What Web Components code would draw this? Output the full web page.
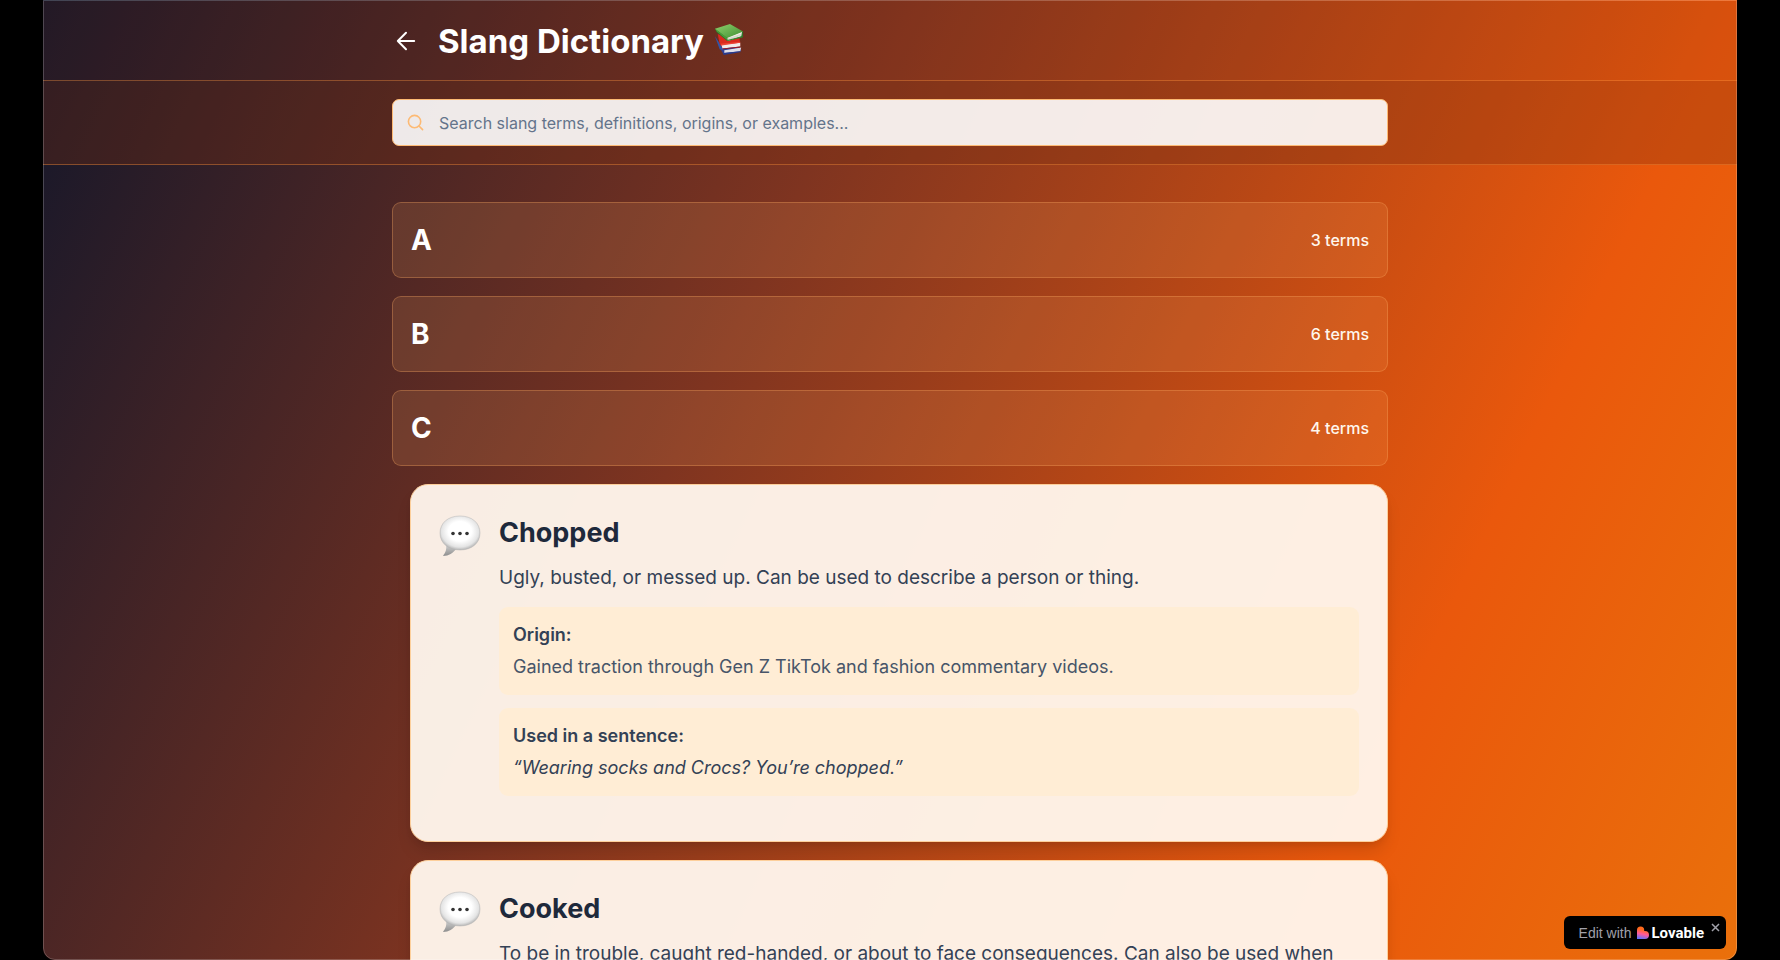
<!DOCTYPE html>
<html lang="en">
<head>
<meta charset="utf-8">
<title>Slang Dictionary</title>
<style>
html { background: #000; }
body { margin: 0; font-family: Inter, sans-serif; height: 100vh; overflow: hidden; }
</style>
</head>
<body>
<slang-app>
  <slang-header slot="header">Slang Dictionary</slang-header>
  <slang-search slot="search"></slang-search>
  <letter-row letter="A" count="3"></letter-row>
  <letter-row letter="B" count="6"></letter-row>
  <letter-row letter="C" count="4"></letter-row>
  <term-card>
    <span slot="term">Chopped</span>
    <span slot="definition">Ugly, busted, or messed up. Can be used to describe a person or thing.</span>
    <term-note slot="notes" label="Origin:">Gained traction through Gen Z TikTok and fashion commentary videos.</term-note>
    <term-note slot="notes" label="Used in a sentence:" quote>“Wearing socks and Crocs? You’re chopped.”</term-note>
  </term-card>
  <term-card>
    <span slot="term">Cooked</span>
    <span slot="definition">To be in trouble, caught red-handed, or about to face consequences. Can also be used when</span>
  </term-card>
  <lovable-badge slot="badge"></lovable-badge>
</slang-app>
<script>
const define = (name, html, setup) => {
  const template = document.createElement('template');
  template.innerHTML = '<style>*{box-sizing:border-box}</style>' + html;
  customElements.define(name, class extends HTMLElement {
    constructor() {
      super();
      this.attachShadow({ mode: 'open' }).append(template.content.cloneNode(true));
    }
    connectedCallback() { if (setup) setup(this, this.shadowRoot); }
  });
};

define('slang-app', `
<style>
:host { display: block; height: 100%; padding: 0 43px; box-sizing: border-box; }
.window { position: relative; height: 100%; overflow: hidden; border-radius: 0 0 12px 12px; }
.window::after { content: ""; position: absolute; inset: 0; border: 1px solid rgba(255,255,255,.2); border-radius: inherit; pointer-events: none; }
.page { min-height: 3600px; padding-top: 1px; background: linear-gradient(to bottom right, #12162a, #7f3420 25%, #ea580c 50%, #eab308); }
.list { display: flex; flex-direction: column; gap: 18px; max-width: 1052px; margin: 0 auto; padding: 37px 28px; }
</style>
<div class="window">
  <div class="page">
    <slot name="header"></slot>
    <slot name="search"></slot>
    <main class="list"><slot></slot></main>
  </div>
  <slot name="badge"></slot>
</div>`);

define('slang-header', `
<style>
:host { display: block; background: rgba(124,45,18,.16); border-bottom: 1px solid rgba(251,146,60,.4); }
header { display: flex; align-items: center; gap: 22px; height: 79px; max-width: 1052px; margin: 0 auto; padding: 0 28px; }
button { display: grid; padding: 0 0 0 4px; border: 0; background: none; color: #fff; }
h1 { display: flex; align-items: center; gap: 10px; margin: 0; font-size: 33px; line-height: 42px; font-weight: 700; color: #fff; }
h1 svg { margin-bottom: 4px; }
</style>
<header>
  <button aria-label="Back"><svg width="20" height="20" viewBox="0 0 22 22" fill="none" stroke="currentColor" stroke-width="2.200" stroke-linecap="round" stroke-linejoin="round"><path d="M11 2 2 11l9 9M2 11h18"/></svg></button>
  <h1><slot></slot>
    <svg width="30" height="32" viewBox="0 0 32 34" role="img" aria-label="Books">
      <defs><linearGradient id="g" x1="0" y1="0" x2="1" y2="1"><stop stop-color="#8fd06c"/><stop offset="1" stop-color="#3f8f32"/></linearGradient></defs>
      <path d="M7 24v4l3 5 19-3-1-4z" fill="#2f3f96"/><path d="m11 29 18-3-1 4-17 2z" fill="#e0dfe8"/><path d="m10 32 18-2v1l-18 3z" fill="#273a8c"/>
      <path d="m1 14 5 14 4 1-3-6z" fill="#3454a6"/>
      <path d="m4 12 2 10 3 4 19-2-1-10z" fill="#d92a1f"/><path d="m8 23 20-2v4l-19 2z" fill="#f1ebea"/><path d="m7 22 21-2v1L8 24z" fill="#ef4435"/><path d="m9 27 19-2v1L9 28z" fill="#a9141a"/>
      <path d="m1 6 2 4 11 9 17-4V9z" fill="#2f7428"/><path d="m14 15 16-6-1 5-14 5z" fill="#f0f0e6"/><path d="m14 17 15-5M14 18l15-5" stroke="#b9bcae" stroke-width=".5"/>
      <path d="m1 6 16-5 14 8-17 7z" fill="url(#g)"/><path d="m1 6 13 10v2L3 9z" fill="#4c9e3b"/><path d="m14 18 16-4v1l-15 4z" fill="#3a8730"/>
    </svg>
  </h1>
</header>`);

define('slang-search', `
<style>
:host { display: block; background: rgba(124,45,18,.3); border-bottom: 1px solid rgba(251,146,60,.4); }
search { display: block; max-width: 1052px; margin: 0 auto; padding: 18px 28px; }
label { display: flex; align-items: center; gap: 15px; height: 47px; padding: 0 14px; border: 1px solid #fdba74; border-radius: 7px; background: rgba(255,255,255,.9); color: #fdba74; }
input { flex: 1; min-width: 0; border: 0; outline: 0; padding: 0; background: none; font: 16px/24px Inter, sans-serif; color: #334155; }
input::placeholder { color: #64748b; opacity: 1; }
</style>
<search><label>
  <svg width="17" height="17" viewBox="0 0 18 18" fill="none" stroke="currentColor" stroke-width="1.700" stroke-linecap="round"><circle cx="8" cy="8" r="6.500"/><path d="m13 13 3.500 3.500"/></svg>
  <input type="text" aria-label="Search" placeholder="Search slang terms, definitions, origins, or examples...">
</label></search>`);

define('letter-row', `
<style>
:host { display: block; }
button { display: flex; justify-content: space-between; align-items: center; width: 100%; height: 76px; padding: 0 18px; border: 1px solid rgba(253,170,96,.32); border-radius: 9px; background: rgba(253,176,106,.14); color: #fff; font-family: inherit; text-align: left; }
.letter { font-size: 28px; line-height: 38px; font-weight: 700; }
.count { font-size: 16px; line-height: 24px; font-weight: 500; color: #fff7ed; }
</style>
<button><span class="letter"></span><span class="count"></span></button>`, (el, root) => {
  root.querySelector('.letter').textContent = el.getAttribute('letter');
  root.querySelector('.count').textContent = el.getAttribute('count') + ' terms';
});

define('term-card', `
<style>
:host { display: block; margin-left: 18px; }
article { display: flex; align-items: flex-start; gap: 18px; min-height: 358px; padding: 28px; border: 1px solid #fdcf9b; border-radius: 18px; background: rgba(255,246,236,.96); box-shadow: 0 12px 18px -4px rgba(0,0,0,.14), 0 4px 8px -4px rgba(0,0,0,.12); }
.icon { flex: none; margin-top: 2px; }
.body { flex: 1; min-width: 0; }
h2 { margin: 0 0 8px; font-size: 27px; line-height: 40px; font-weight: 700; color: #1e293b; }
p { margin: 0 0 12px; font-size: 19px; line-height: 34px; color: #334155; }
.notes { display: grid; gap: 13px; }
</style>
<article>
  <svg class="icon" width="42" height="42" viewBox="0 0 42 42" role="img" aria-label="Speech balloon">
    <defs>
      <radialGradient id="b" cx=".5" cy=".45" r=".58"><stop offset=".5" stop-color="#fff"/><stop offset=".8" stop-color="#e4e4e4"/><stop offset="1" stop-color="#a5a5a5"/></radialGradient>
      <linearGradient id="t" x1="0" y1="0" x2="0" y2="1"><stop stop-color="#cfcfcf"/><stop offset="1" stop-color="#8d8d8d"/></linearGradient>
    </defs>
    <path d="M7 30c1 5-1 8-3 11 6 0 10-3 13-7z" fill="url(#t)"/>
    <path d="M21 1C9 1 1 8 1 18s8 17 20 17 20-7 20-17S33 1 21 1z" fill="url(#b)" stroke="#b5b5b5" stroke-width=".5"/>
    <g fill="#333"><circle cx="14" cy="18.500" r="1.800"/><circle cx="21" cy="18.500" r="1.800"/><circle cx="28" cy="18.500" r="1.800"/></g>
  </svg>
  <div class="body">
    <h2><slot name="term"></slot></h2>
    <p><slot name="definition"></slot></p>
    <div class="notes"><slot name="notes"></slot></div>
  </div>
</article>`);

define('term-note', `
<style>
:host { display: block; padding: 13px 14px 14px; border-radius: 9px; background: #ffedd5; color: #334155; }
strong { display: block; margin-bottom: 3px; font-size: 18px; line-height: 29px; font-weight: 600; }
div { font-size: 18px; line-height: 29px; color: #475569; }
:host([quote]) div { font-style: italic; color: #334155; }
</style>
<strong></strong><div><slot></slot></div>`, (el, root) => {
  root.querySelector('strong').textContent = el.getAttribute('label');
});

define('lovable-badge', `
<style>
:host { position: absolute; right: 11px; bottom: 11px; display: flex; align-items: center; height: 33px; padding: 0 6px 0 15px; border-radius: 6px; background: #000; box-sizing: border-box; font: 14px/20px "Liberation Sans", sans-serif; }
a { display: flex; align-items: center; gap: 5px; color: #a1a1aa; text-decoration: none; }
b { color: #fff; font: 700 15px/20px Roboto, sans-serif; }
.logo { display: flex; align-items: center; gap: 3px; }
button { align-self: flex-start; margin: 7px 0 0 7px; padding: 0; border: 0; background: none; color: #a1a1aa; display: grid; }
</style>
<a href="#"><span>Edit with</span><span class="logo"><svg width="12" height="13" viewBox="0 0 12 13"><defs><linearGradient id="l" x1=".5" y1="0" x2=".3" y2="1"><stop offset=".25" stop-color="#ff6a1c"/><stop offset=".6" stop-color="#ff5a9a"/><stop offset="1" stop-color="#5a74ff"/></linearGradient></defs><path d="M0 4a3.600 3.600 0 0 1 7.200 0v1H8a4 4 0 0 1 0 8H0z" fill="url(#l)"/></svg><b>Lovable</b></span></a>
<button aria-label="Close"><svg width="9" height="9" viewBox="0 0 9 9" stroke="currentColor" stroke-width="1.500"><path d="m1 1 7 7M8 1 1 8"/></svg></button>`);
</script>
</body>
</html>
